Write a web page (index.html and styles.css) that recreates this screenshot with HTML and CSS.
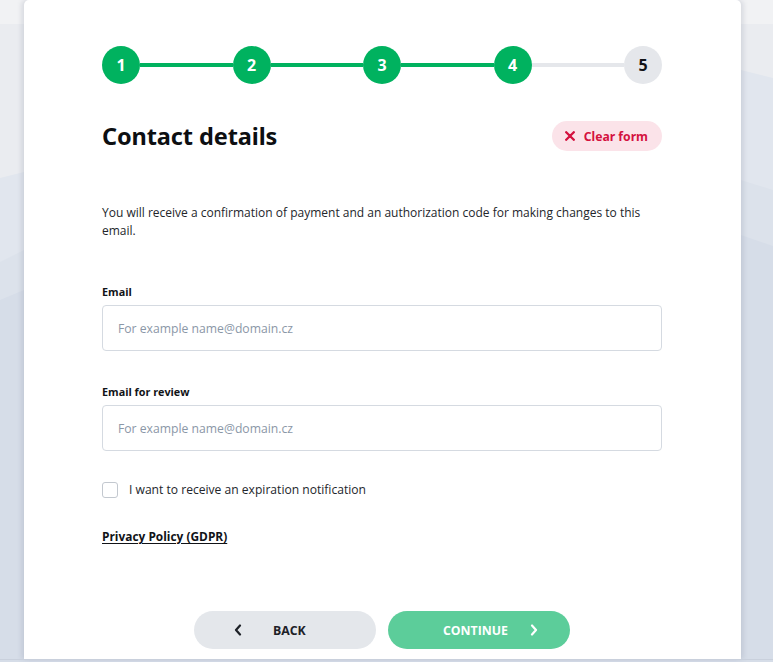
FILE: index.html
```html
<!DOCTYPE html>
<html lang="en">
<head>
<meta charset="utf-8">
<title>Contact details</title>
<link rel="stylesheet" href="styles.css">
</head>
<body>
<div class="page">
  <svg class="bg" width="773" height="662" viewBox="0 0 773 662" preserveAspectRatio="none" aria-hidden="true">
    <rect x="0" y="0" width="773" height="662" fill="#eaecf0"/>
    <rect x="0" y="0" width="773" height="24" fill="#f1f2f4"/>
    <path d="M0 178 L24 172 L741 70 L773 78 L773 662 L0 662 Z" fill="#e1e6ee"/>
    <path d="M0 262 L24 250 L741 180 L773 190 L773 662 L0 662 Z" fill="#dce2eb"/>
    <path d="M0 300 L24 290 L741 235 L773 246 L773 662 L0 662 Z" fill="#d6dde8"/>
  </svg>
  <main class="card">
    <ol class="stepper">
      <li class="step done">1</li>
      <li class="bar done"></li>
      <li class="step done">2</li>
      <li class="bar done"></li>
      <li class="step done">3</li>
      <li class="bar done"></li>
      <li class="step done">4</li>
      <li class="bar"></li>
      <li class="step">5</li>
    </ol>

    <div class="title-row">
      <h1 class="title">Contact details</h1>
      <button class="clear-btn" type="button">
        <svg width="10" height="10" viewBox="0 0 10 10" aria-hidden="true"><path d="M1.2 1.2 L8.8 8.8 M8.8 1.2 L1.2 8.8" stroke="#d4123f" stroke-width="2.3" stroke-linecap="round"/></svg>
        <span>Clear form</span>
      </button>
    </div>

    <p class="intro">You will receive a confirmation of payment and an authorization code for making changes to this email.</p>

    <label class="field-label first" for="email">Email</label>
    <input class="field" id="email" type="text" placeholder="For example name@domain.cz">

    <label class="field-label second" for="email2">Email for review</label>
    <input class="field" id="email2" type="text" placeholder="For example name@domain.cz">

    <label class="check-row">
      <span class="checkbox"></span>
      <span>I want to receive an expiration notification</span>
    </label>

    <a class="privacy" href="#">Privacy Policy (GDPR)</a>

    <div class="actions">
      <button class="btn btn-back" type="button">
        <svg width="8" height="12" viewBox="0 0 8 12" aria-hidden="true"><path d="M6 1.5 L2 6 L6 10.5" fill="none" stroke="#1d2127" stroke-width="2.2" stroke-linecap="round" stroke-linejoin="round"/></svg>
        <span>BACK</span>
      </button>
      <button class="btn btn-next" type="button">
        <span>CONTINUE</span>
        <svg width="8" height="12" viewBox="0 0 8 12" aria-hidden="true"><path d="M2 1.5 L6 6 L2 10.5" fill="none" stroke="#ffffff" stroke-width="2.2" stroke-linecap="round" stroke-linejoin="round"/></svg>
      </button>
    </div>
  </main>
  <div class="bottom-line"></div>
</div>
</body>
</html>
```

FILE: styles.css
```css
* { box-sizing: border-box; }

html, body {
  margin: 0;
  padding: 0;
}

body {
  width: 773px;
  height: 662px;
  overflow: hidden;
  font-family: "Open Sans", "Noto Sans", sans-serif;
  color: #1b1e23;
  background: #d6dde8;
}

.page {
  position: relative;
  width: 773px;
  height: 662px;
}

.bg {
  position: absolute;
  left: 0;
  top: 0;
  z-index: 0;
}

.card {
  position: relative;
  z-index: 1;
  margin-left: 24px;
  width: 717px;
  height: 659px;
  background: #ffffff;
  border-radius: 5px 5px 0 0;
  box-shadow: -3px 0 4px rgba(120, 130, 150, 0.18), 3px 0 4px rgba(120, 130, 150, 0.18);
  padding: 46px 79px 0 78px;
  display: flex;
  flex-direction: column;
}

.bottom-line {
  position: relative;
  z-index: 2;
  height: 1px;
  background: #c9d0dc;
}

/* Stepper */
.stepper {
  list-style: none;
  margin: 0;
  padding: 0;
  display: flex;
  align-items: center;
  height: 38px;
}

.step {
  flex: 0 0 38px;
  height: 38px;
  border-radius: 50%;
  background: #e5e7eb;
  color: #111317;
  font-family: "Noto Sans", "Open Sans", sans-serif;
  font-weight: 700;
  font-size: 16px;
  display: flex;
  align-items: center;
  justify-content: center;
}

.step.done {
  background: #00b25f;
  color: #ffffff;
}

.bar {
  flex: 1 1 auto;
  height: 4px;
  background: #e5e7eb;
}

.bar.done {
  background: #00b25f;
}

/* Title */
.title-row {
  margin-top: 37px;
  display: flex;
  align-items: center;
  justify-content: space-between;
  height: 30px;
}

.title {
  margin: 0;
  font-family: "Noto Sans", "Open Sans", sans-serif;
  font-weight: 700;
  font-size: 23.5px;
  letter-spacing: -0.1px;
  color: #0d0f12;
  line-height: 30px;
}

.clear-btn {
  border: 0;
  height: 30px;
  padding: 0 14px 0 13px;
  border-radius: 15px;
  background: #fbe3e9;
  color: #d4123f;
  font-family: "Noto Sans", "Open Sans", sans-serif;
  font-weight: 700;
  font-size: 12.2px;
  display: flex;
  align-items: center;
  gap: 9px;
  cursor: pointer;
}

/* Intro */
.intro {
  margin: 53px 0 0;
  font-size: 12px;
  line-height: 18px;
  color: #23262b;
}

/* Fields */
.field-label {
  display: block;
  font-size: 10.8px;
  font-weight: 700;
  line-height: 16px;
  color: #111317;
}

.field-label.first {
  margin-top: 44px;
}

.field-label.second {
  margin-top: 33px;
}

.field {
  display: block;
  margin-top: 5px;
  width: 100%;
  height: 46px;
  border: 1px solid #d5dae1;
  border-radius: 4px;
  padding: 0 15px;
  font-family: "Open Sans", sans-serif;
  font-size: 12.2px;
  color: #1b1e23;
  background: #ffffff;
  outline: none;
}

.field::placeholder {
  color: #8b97a7;
}

/* Checkbox */
.check-row {
  margin-top: 30px;
  display: flex;
  align-items: center;
  gap: 11px;
  font-size: 12.1px;
  line-height: 18px;
  color: #23262b;
}

.checkbox {
  width: 16px;
  height: 16px;
  border: 1px solid #c3c8cf;
  border-radius: 3px;
  background: #ffffff;
}

.privacy {
  margin-top: 29px;
  align-self: flex-start;
  font-size: 11.9px;
  font-weight: 700;
  line-height: 16px;
  color: #111317;
  text-decoration: underline;
  text-underline-offset: 2px;
}

/* Actions */
.actions {
  margin-top: 67px;
  display: flex;
  justify-content: center;
  gap: 12px;
}

.btn {
  width: 182px;
  height: 38px;
  border: 0;
  border-radius: 19px;
  font-family: "Open Sans", sans-serif;
  font-weight: 700;
  font-size: 12.3px;
  display: flex;
  align-items: center;
  justify-content: flex-start;
  cursor: pointer;
}

.btn-back {
  background: #e4e7eb;
  color: #1d2127;
  padding-left: 40px;
  gap: 31px;
}

.btn-next {
  background: #5ccd9a;
  color: #ffffff;
  padding-left: 55px;
  gap: 22px;
}
```
